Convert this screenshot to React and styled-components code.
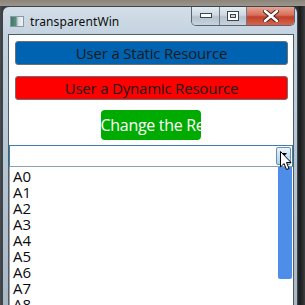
import React from "react";
import styled, { createGlobalStyle } from "styled-components";

const Global = createGlobalStyle`
  html, body { margin: 0; padding: 0; background: #1e1e1e; }
  * { box-sizing: border-box; }
`;

const Desktop = styled.div`
  position: relative;
  width: 305px;
  height: 305px;
  overflow: hidden;
  padding: 6px 0 0 2px;
  background:
    linear-gradient(180deg, #8c8478 0px, #9a968e 6px, transparent 6px),
    linear-gradient(90deg, #4a4e52 0px, #3a3d40 2px, #2b2d2f 297px, #1b1c1d 300px, #3a3c3e 305px);
`;

const Window = styled.div`
  width: 296px;
  height: 310px;
  border: 1px solid #3d444c;
  border-radius: 7px 7px 0 0;
  background: linear-gradient(180deg, #d3dfe9 0%, #c1d1de 10%, #b9c8d6 40%, #a8b6c2 100%);
  display: flex;
  flex-direction: column;
  padding: 0 3px 0 5px;
`;

const TitleBar = styled.div`
  height: 27px;
  display: flex;
  align-items: flex-start;
`;

const AppIcon = styled.div`
  width: 14px;
  height: 11px;
  margin: 9px 0 0 2px;
  border: 1px solid #8a98a4;
  background: linear-gradient(90deg, #3f7a6a 0%, #5a8f7a 40%, #d8e0e6 60%, #f0f4f6 100%);
`;

const Title = styled.div`
  margin: 6px 0 0 6px;
  font: 12px "Noto Sans", "DejaVu Sans", sans-serif;
  color: #0d0d0d;
  letter-spacing: 0.1px;
`;

const Caption = styled.div`
  margin-left: auto;
  margin-right: -1px;
  display: flex;
  height: 19px;
  border: 1px solid #5a6570;
  border-top: none;
  border-radius: 0 0 5px 5px;
  overflow: hidden;
`;

const CapBtn = styled.div`
  width: ${(p) => p.$w}px;
  height: 100%;
  display: flex;
  align-items: center;
  justify-content: center;
  border-left: ${(p) => (p.$first ? "none" : "1px solid #6e7a86")};
  background: ${(p) =>
    p.$close
      ? "linear-gradient(180deg, #e8a494 0%, #d6705c 45%, #c0402a 55%, #d8644c 100%)"
      : "linear-gradient(180deg, #e4ecf2 0%, #cdd8e2 45%, #b4c2ce 55%, #c8d4de 100%)"};
`;

const Client = styled.div`
  flex: 1;
  background: #ffffff;
  border: 1px solid #4f5b66;
  border-bottom: none;
  display: flex;
  flex-direction: column;
  align-items: stretch;
`;

const ResButton = styled.div`
  margin: ${(p) => p.$mt}px 5px 0 6px;
  height: 24px;
  border: 1px solid #707070;
  border-radius: 3px;
  background: ${(p) => p.$bg};
  color: #1a1a1a;
  font: 15px "Open Sans", "Noto Sans", sans-serif;
  display: flex;
  align-items: center;
  justify-content: center;
  line-height: 1;
  letter-spacing: -0.2px;
`;

const GreenRow = styled.div`
  display: flex;
  justify-content: center;
  margin-top: 10px;
  padding-right: 1px;
`;

const GreenButton = styled.div`
  width: 100px;
  height: 30px;
  border-radius: 4px;
  background: #00ab00;
  color: #ffffff;
  font: 16px "Open Sans", "Noto Sans", sans-serif;
  letter-spacing: -0.3px;
  white-space: nowrap;
  overflow: hidden;
  display: flex;
  align-items: center;
`;

const Combo = styled.div`
  margin-top: 5px;
  height: 22px;
  border: 1px solid #3c7fb1;
  border-bottom-color: #8aa0b4;
  display: flex;
  justify-content: flex-end;
  padding: 1px;
`;

const DropBtn = styled.div`
  width: 15px;
  height: 100%;
  border: 1px solid #6f8ea8;
  border-radius: 2px;
  background: linear-gradient(180deg, #eaf4fb 0%, #c4e2f4 50%, #a6d2ee 100%);
  display: flex;
  align-items: flex-start;
  justify-content: center;
  padding-top: 5px;
`;

const ListArea = styled.div`
  flex: 1;
  display: flex;
  border-left: 1px solid #a0a0a0;
`;

const Items = styled.div`
  flex: 1;
  padding: 1px 0 0 3px;
`;

const Item = styled.div`
  height: 16px;
  font: 15px "Open Sans", "Noto Sans", sans-serif;
  line-height: 16px;
  color: #0a0a10;
`;

const Track = styled.div`
  width: 15px;
  padding-right: 1px;
`;

const Thumb = styled.div`
  height: 112px;
  background: #4f8ee8;
  border-radius: 0 0 2px 2px;
`;

const Cursor = styled.svg`
  position: absolute;
  left: 280px;
  top: 151px;
`;

export default function App() {
  const items = ["A0", "A1", "A2", "A3", "A4", "A5", "A6", "A7", "A8"];
  return (
    <Desktop>
      <Global />
      <Window>
        <TitleBar>
          <AppIcon />
          <Title>transparentWin</Title>
          <Caption>
            <CapBtn $w={27} $first>
              <svg width="12" height="6" viewBox="0 0 12 6">
                <rect x="0.5" y="0.5" width="11" height="4" fill="#fff" stroke="#3c4650" />
              </svg>
            </CapBtn>
            <CapBtn $w={27}>
              <svg width="12" height="10" viewBox="0 0 12 10">
                <rect x="0.5" y="0.5" width="11" height="9" fill="#fff" stroke="#3c4650" />
                <rect x="3" y="3" width="6" height="4" fill="#3c4650" />
                <rect x="4" y="4" width="4" height="2" fill="#c8d4de" />
              </svg>
            </CapBtn>
            <CapBtn $w={48} $close>
              <svg width="16" height="12" viewBox="0 0 16 12">
                <path d="M2 1 L14 11 M14 1 L2 11" stroke="#4a2018" strokeWidth="4.5" strokeLinecap="round" />
                <path d="M2 1 L14 11 M14 1 L2 11" stroke="#ffffff" strokeWidth="2.6" strokeLinecap="round" />
              </svg>
            </CapBtn>
          </Caption>
        </TitleBar>
        <Client>
          <ResButton $mt={6} $bg="#0063b1">User a Static Resource</ResButton>
          <ResButton $mt={11} $bg="#ff0000">User a Dynamic Resource</ResButton>
          <GreenRow>
            <GreenButton>Change the Resource</GreenButton>
          </GreenRow>
          <Combo>
            <DropBtn>
              <svg width="7" height="4" viewBox="0 0 7 4">
                <path d="M0 0 L7 0 L3.5 4 Z" fill="#000" />
              </svg>
            </DropBtn>
          </Combo>
          <ListArea>
            <Items>
              {items.map((t) => (
                <Item key={t}>{t}</Item>
              ))}
            </Items>
            <Track>
              <Thumb />
            </Track>
          </ListArea>
        </Client>
      </Window>
      <Cursor width="12" height="20" viewBox="0 0 12 20">
        <path d="M0.5 0.5 L0.5 16 L4 12.5 L6.5 18.5 L9 17.5 L6.5 11.5 L11 11.5 Z" fill="#fff" stroke="#000" strokeWidth="1" />
      </Cursor>
    </Desktop>
  );
}
